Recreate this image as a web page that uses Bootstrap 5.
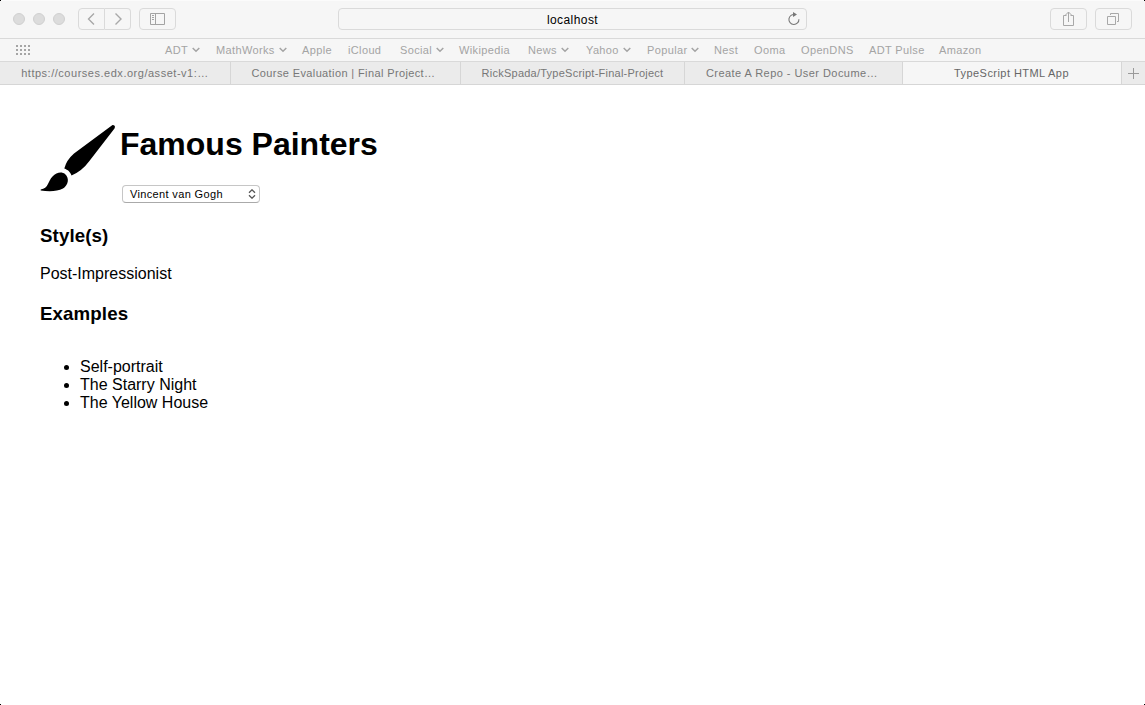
<!DOCTYPE html>
<html lang="en">
<head>
<meta charset="utf-8">
<title>TypeScript HTML App</title>
<link href="https://cdn.jsdelivr.net/npm/bootstrap@5.3.0/dist/css/bootstrap.min.css" rel="stylesheet">
<style>
body{font-family:"Liberation Sans",Arial,sans-serif;color:#000;background:#fff;font-size:16px;line-height:18px}
svg{display:block;flex:none}
.browser-window{height:705px}
/* dark pixels outside the rounded window corners */
.browser-window::after{content:"";position:absolute;inset:0;pointer-events:none;
 background:linear-gradient(#000,#000) 0 0/1px 1px,linear-gradient(#000,#000) 100% 0/1px 1px,linear-gradient(#000,#000) 0 100%/1px 1px,linear-gradient(#000,#000) 100% 100%/1px 1px;background-repeat:no-repeat}
.toolbar{height:39px;background:#f6f6f6;border-bottom:1px solid #d9d9d9;border-top:1px solid #fbfbfb;padding:7px 13px 0}
.light{width:12px;height:12px;border-radius:50%;background:#dcdcdc;border:1px solid #d0d0d0;margin-top:5px}
.tool{height:22px;border:1px solid #dadada;border-radius:4px;background:#f6f6f6;color:#a5a5a5;padding:0}
.address{width:469px;height:22px;border:1px solid #dadada;border-radius:4px;font-size:12px;letter-spacing:.42px;line-height:22px}
.address .reload{right:6px;top:3px}
.bookmarks{height:23px;background:#f6f6f6;border-bottom:1px solid #d9d9d9;color:#a4a4a4;font-size:11px;letter-spacing:.36px;line-height:22px;padding-left:16px}
.marks{display:grid;grid-template-columns:51px 86px 46px 52px 59px 69px 58px 61px 67px 40px 47px 68px 70px 50px;margin-left:134px}
.marks span{display:flex;align-items:center;white-space:nowrap}
.marks svg{margin-left:4px}
.tabs{display:grid;grid-template-columns:231px 230px 224px 218px 219px 23px;height:23px;background:#ebebeb;border-bottom:1px solid #d6d6d6;color:#777;font-size:11px;letter-spacing:.38px;line-height:22px}
.tabs>div{border-right:1px solid #d6d6d6;white-space:nowrap}
.tabs>div:last-child{border:0}
.tabs .current{background:#f6f6f6;color:#666}
.page{padding:40px 40px 0}
h1{font-size:32px;line-height:36px;font-weight:700;margin:1px 0 0 -1px}
.painter{width:138px;height:18px;margin:23px 0 0 1px;border:1px solid #c6c6c6;border-bottom-color:#aaa;border-radius:4px;background:#fff;font-size:11px;letter-spacing:.35px;padding:0 3px 0 7px;line-height:16px}
h3{font-size:18.72px;line-height:22px;font-weight:700;margin:0;letter-spacing:.1px}
</style>
</head>
<body>
<div class="browser-window position-relative overflow-hidden">
 <header>
  <div class="toolbar d-flex">
   <div class="d-flex gap-2">
    <i class="light"></i><i class="light"></i><i class="light"></i>
   </div>
   <div class="d-flex" style="margin-left:13px">
    <div class="tool d-flex align-items-center justify-content-center rounded-end-0" style="width:27px"><svg width="10" height="14" viewBox="0 0 10 14" fill="none" stroke="#a8a8a8" stroke-width="1.4"><path d="M7 1.500 1.500 7l5.500 5.500"/></svg></div>
    <div class="tool d-flex align-items-center justify-content-center rounded-start-0 border-start-0" style="width:26px"><svg width="10" height="14" viewBox="0 0 10 14" fill="none" stroke="#a8a8a8" stroke-width="1.4"><path d="M2.500 1.500 8 7l-5.500 5.500"/></svg></div>
   </div>
   <div class="tool d-flex align-items-center justify-content-center ms-2" style="width:37px"><svg width="15" height="12" viewBox="0 0 15 12" fill="none" stroke="#a3a3a3"><path d="M.5.5h14v11H.5zM5.500.5v11M2 2.500h2M2 4.500h2M2 6.500h2"/></svg></div>
   <div class="address position-relative text-center" style="margin-left:162px">localhost
    <svg class="reload position-absolute" width="12" height="14" viewBox="0 0 12 14"><path d="M7 2.600A5 5 0 1 0 10.900 7.200" fill="none" stroke="#777" stroke-width="1.1"/><path d="M5 0 9 2.500 5 5z" fill="#777"/></svg>
   </div>
   <div class="d-flex gap-2 ms-auto">
    <div class="tool d-flex justify-content-center" style="width:37px"><svg width="13" height="16" viewBox="0 0 13 16" fill="none" stroke="#a8a8a8" style="margin-top:2px"><path d="M4.500 4.500h-3v10h10v-10h-3M6.500 11V1M3.500 4l3-3 3 3"/></svg></div>
    <div class="tool d-flex justify-content-center" style="width:37px"><svg width="13" height="13" viewBox="0 0 13 13" fill="none" stroke="#a8a8a8" style="margin-top:4px"><path d="M.5 3.500h8v8h-8zM3.500 2V.5h8v8H10"/></svg></div>
   </div>
  </div>
  <nav class="bookmarks d-flex">
   <svg width="15" height="11" viewBox="0 0 15 11" fill="#a5a5a5" style="margin-top:6px"><path d="M0 0h2v2H0zM4 0h2v2H4zM8 0h2v2H8zM12 0h2v2h-2zM0 4h2v2H0zM4 4h2v2H4zM8 4h2v2H8zM12 4h2v2h-2zM0 8h2v2H0zM4 8h2v2H4zM8 8h2v2H8zM12 8h2v2h-2z"/></svg>
   <div class="marks">
    <span>ADT<svg width="8" height="6" fill="none" stroke="#a4a4a4" stroke-width="1.500"><path d="M.7 1l3.300 3.300L7.300 1"/></svg></span>
    <span>MathWorks<svg width="8" height="6" fill="none" stroke="#a4a4a4" stroke-width="1.500"><path d="M.7 1l3.300 3.300L7.300 1"/></svg></span>
    <span>Apple</span><span>iCloud</span>
    <span>Social<svg width="8" height="6" fill="none" stroke="#a4a4a4" stroke-width="1.500"><path d="M.7 1l3.300 3.300L7.300 1"/></svg></span>
    <span>Wikipedia</span>
    <span>News<svg width="8" height="6" fill="none" stroke="#a4a4a4" stroke-width="1.500"><path d="M.7 1l3.300 3.300L7.300 1"/></svg></span>
    <span>Yahoo<svg width="8" height="6" fill="none" stroke="#a4a4a4" stroke-width="1.500"><path d="M.7 1l3.300 3.300L7.300 1"/></svg></span>
    <span>Popular<svg width="8" height="6" fill="none" stroke="#a4a4a4" stroke-width="1.500"><path d="M.7 1l3.300 3.300L7.300 1"/></svg></span>
    <span>Nest</span><span>Ooma</span><span>OpenDNS</span><span>ADT Pulse</span><span>Amazon</span>
   </div>
  </nav>
  <div class="tabs text-center">
   <div style="letter-spacing:.52px">https://courses.edx.org/asset-v1:…</div>
   <div style="padding-right:4px">Course Evaluation | Final Project…</div>
   <div style="letter-spacing:.24px">RickSpada/TypeScript-Final-Project</div>
   <div style="padding-right:3px;letter-spacing:.45px">Create A Repo - User Docume…</div>
   <div class="current" style="padding-right:1px;letter-spacing:.44px">TypeScript HTML App</div>
   <div class="d-flex align-items-center justify-content-center"><svg width="11" height="11" stroke="#999"><path d="M5.500 0v11M0 5.500h11"/></svg></div>
  </div>
 </header>
 <main class="page">
  <div class="d-flex">
   <svg width="76" height="67" viewBox="0 0 76 67"><path d="M72.500 0Q76 0 74.500 3.500L49 36.500Q42 46 31.500 50.500C30 46.500 28 45 24.300 43.500Q26.500 35 34 28.500ZM.7 64.500C8.500 63.500 8 56 12.500 51.500C16.500 47 22 46.500 25 49C30 53.500 28 60.500 23 63.500C17 66.800 8 66.500 .7 65.500Z"/></svg>
   <div style="margin-left:5px">
    <h1>Famous Painters</h1>
    <div class="painter d-flex align-items-center justify-content-between shadow-none"><span>Vincent van Gogh</span><svg width="8" height="10" fill="none" stroke="#555" stroke-width="1.300"><path d="M1 3.700 4 .8l3 2.900M1 6.300l3 2.900 3-2.900"/></svg></div>
   </div>
  </div>
  <h3 style="margin-top:22px">Style(s)</h3>
  <p style="margin:18px 0 20px">Post-Impressionist</p>
  <h3>Examples</h3>
  <ul style="margin:33px 0 0;padding-left:40px">
   <li>Self-portrait</li><li>The Starry Night</li><li>The Yellow House</li>
  </ul>
 </main>
</div>
<script src="https://cdn.jsdelivr.net/npm/bootstrap@5.3.0/dist/js/bootstrap.bundle.min.js"></script>
</body>
</html>
